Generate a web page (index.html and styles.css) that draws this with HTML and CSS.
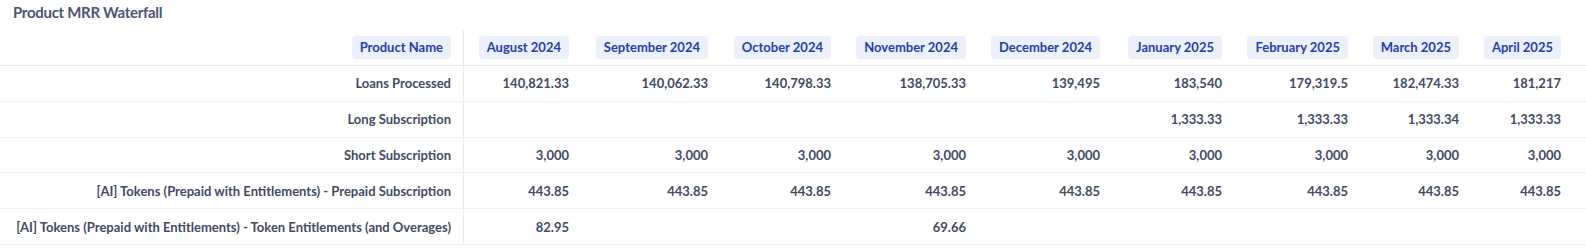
FILE: index.html
```html
<!DOCTYPE html>
<html>
<head>
<meta charset="utf-8">
<link rel="stylesheet" href="styles.css">
</head>
<body>
<div class="page">
  <div class="title">Product MRR Waterfall</div>
  <div class="table">
    <div class="row head">
      <div class="cell first"><span class="pill">Product Name</span></div>
      <div class="cell"><span class="pill">August 2024</span></div>
      <div class="cell"><span class="pill">September 2024</span></div>
      <div class="cell"><span class="pill">October 2024</span></div>
      <div class="cell"><span class="pill">November 2024</span></div>
      <div class="cell"><span class="pill">December 2024</span></div>
      <div class="cell"><span class="pill">January 2025</span></div>
      <div class="cell"><span class="pill">February 2025</span></div>
      <div class="cell"><span class="pill">March 2025</span></div>
      <div class="cell"><span class="pill">April 2025</span></div>
      <div class="cell fill"></div>
    </div>
    <div class="row">
      <div class="cell first label">Loans Processed</div>
      <div class="cell">140,821.33</div>
      <div class="cell">140,062.33</div>
      <div class="cell">140,798.33</div>
      <div class="cell">138,705.33</div>
      <div class="cell">139,495</div>
      <div class="cell">183,540</div>
      <div class="cell">179,319.5</div>
      <div class="cell">182,474.33</div>
      <div class="cell">181,217</div>
      <div class="cell fill"></div>
    </div>
    <div class="row">
      <div class="cell first label">Long Subscription</div>
      <div class="cell"></div>
      <div class="cell"></div>
      <div class="cell"></div>
      <div class="cell"></div>
      <div class="cell"></div>
      <div class="cell">1,333.33</div>
      <div class="cell">1,333.33</div>
      <div class="cell">1,333.34</div>
      <div class="cell">1,333.33</div>
      <div class="cell fill"></div>
    </div>
    <div class="row">
      <div class="cell first label">Short Subscription</div>
      <div class="cell">3,000</div>
      <div class="cell">3,000</div>
      <div class="cell">3,000</div>
      <div class="cell">3,000</div>
      <div class="cell">3,000</div>
      <div class="cell">3,000</div>
      <div class="cell">3,000</div>
      <div class="cell">3,000</div>
      <div class="cell">3,000</div>
      <div class="cell fill"></div>
    </div>
    <div class="row">
      <div class="cell first label">[AI] Tokens (Prepaid with Entitlements) - Prepaid Subscription</div>
      <div class="cell">443.85</div>
      <div class="cell">443.85</div>
      <div class="cell">443.85</div>
      <div class="cell">443.85</div>
      <div class="cell">443.85</div>
      <div class="cell">443.85</div>
      <div class="cell">443.85</div>
      <div class="cell">443.85</div>
      <div class="cell">443.85</div>
      <div class="cell fill"></div>
    </div>
    <div class="row">
      <div class="cell first label">[AI] Tokens (Prepaid with Entitlements) - Token Entitlements (and Overages)</div>
      <div class="cell">82.95</div>
      <div class="cell"></div>
      <div class="cell"></div>
      <div class="cell">69.66</div>
      <div class="cell"></div>
      <div class="cell"></div>
      <div class="cell"></div>
      <div class="cell"></div>
      <div class="cell"></div>
      <div class="cell fill"></div>
    </div>
  </div>
</div>
</body>
</html>
```
FILE: styles.css
```css
html, body {
  margin: 0;
  padding: 0;
  background: #ffffff;
}
.page {
  font-family: Lato, "Noto Sans", sans-serif;
  color: #414a63;
}
.title {
  height: 30px;
  padding: 0 13px;
  line-height: 25px;
  font-size: 15px;
  font-weight: 700;
  letter-spacing: -0.3px;
  color: #4a5574;
}
.table {
  display: flex;
  flex-direction: column;
}
.row {
  display: grid;
  grid-template-columns: 464px 118px 139px 123px 135px 134px 122px 126px 111px 102px 1fr;
  height: 35.8px;
  box-sizing: border-box;
  border-bottom: 1px solid #f0f1f4;
  font-size: 13px;
  font-weight: 700;
}
.row.head {
  height: 36px;
  border-bottom: 1px solid #e6e8ec;
}
.cell {
  display: flex;
  align-items: center;
  justify-content: flex-end;
  padding: 0 13px;
  white-space: nowrap;
}
.cell.first {
  padding: 0 12px;
  border-right: 1px solid #e8eaee;
}
.cell.fill {
  padding: 0;
}
.pill {
  display: inline-block;
  height: 23px;
  line-height: 23px;
  padding: 0 8px;
  border-radius: 4px;
  background: #ebf0fa;
  color: #1f40ad;
  font-weight: 700;
}
```
